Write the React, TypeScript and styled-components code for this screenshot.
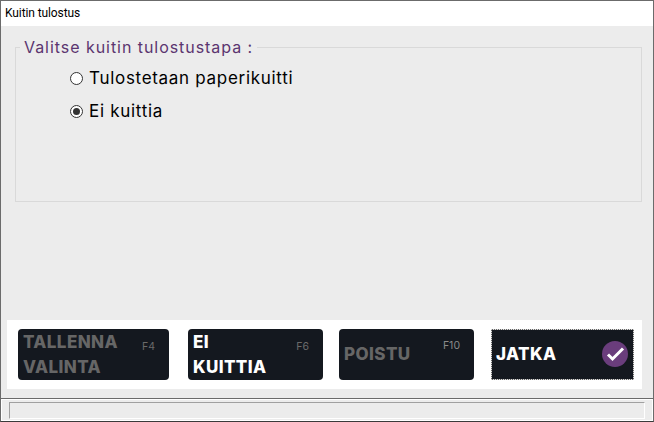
import React from 'react';
import styled, { createGlobalStyle } from 'styled-components';

const GlobalStyle = createGlobalStyle`
  html, body {
    margin: 0;
    padding: 0;
    background: #ececec;
  }
`;

const Window = styled.div`
  width: 654px;
  height: 422px;
  box-sizing: border-box;
  display: flex;
  flex-direction: column;
  background: #ececec;
  border-top: 1px solid #6b6b6b;
  border-left: 1px solid #6b6b6b;
  border-right: 1px solid #6b6b6b;
  border-bottom: 1px solid #3a3a3a;
  overflow: hidden;
`;

const TitleBar = styled.div`
  height: 25px;
  background: #fff;
  padding-left: 4px;
  font: 12px/25px Roboto, 'Liberation Sans', sans-serif;
  letter-spacing: -0.1px;
  color: #000;
`;

const Content = styled.div`
  flex: 1;
  display: flex;
  flex-direction: column;
  padding: 10px 11px 0 14px;
`;

const Group = styled.fieldset`
  margin: 0;
  padding: 0;
  height: 166px;
  box-sizing: border-box;
  border: 1px solid #d9d9d9;
`;

const Legend = styled.legend`
  margin-left: 4px;
  padding: 0 4px;
  font: 16px/22px Inter, 'Noto Sans', sans-serif;
  color: #5b3570;
  letter-spacing: 0.95px;
`;

const Options = styled.div`
  padding: 7px 0 0 54px;
  display: flex;
  flex-direction: column;
  gap: 7px;
`;

const Option = styled.label`
  display: flex;
  align-items: center;
  gap: 6px;
  height: 26px;
  font: 17px/26px Inter, 'Noto Sans', sans-serif;
  letter-spacing: 0.7px;
  color: #000;
`;

const Radio = styled.span<{ $checked?: boolean }>`
  width: 13px;
  height: 13px;
  box-sizing: border-box;
  border-radius: 50%;
  border: 1px solid #333;
  background: #fff;
  display: flex;
  align-items: center;
  justify-content: center;
  &::after {
    content: '';
    display: ${(p) => (p.$checked ? 'block' : 'none')};
    width: 7px;
    height: 7px;
    border-radius: 50%;
    background: #333;
  }
`;

const ActionBar = styled.div`
  margin-top: 118px;
  margin-left: -8px;
  width: 635px;
  height: 69px;
  background: #fff;
  display: flex;
  align-items: center;
  padding-left: 11px;
  box-sizing: border-box;
`;

const ActionButton = styled.button<{ $width: number; $gap: number; $focused?: boolean; $disabled?: boolean }>`
  position: relative;
  width: ${(p) => p.$width}px;
  margin-right: ${(p) => p.$gap}px;
  height: 51px;
  box-sizing: border-box;
  background: #14181f;
  border: none;
  border-radius: ${(p) => (p.$focused ? '0' : '4px')};
  outline: ${(p) => (p.$focused ? '1px dotted #ddd' : 'none')};
  outline-offset: -1px;
  box-shadow: ${(p) => (p.$focused ? 'inset 0 0 0 1px #666' : 'none')};
  padding: 0 0 0 5px;
  display: flex;
  align-items: center;
  text-align: left;
  font: 800 17px/25px Inter, 'Noto Sans', sans-serif;
  letter-spacing: 0.4px;
  color: ${(p) => (p.$disabled ? '#666' : '#fff')};
`;

const KeyHint = styled.span<{ $raised?: boolean }>`
  position: absolute;
  right: 14px;
  top: ${(p) => (p.$raised ? '11px' : '12px')};
  font: 400 10.5px/12px Inter, 'Noto Sans', sans-serif;
  letter-spacing: 0;
  color: ${(p) => (p.$raised ? '#8a8a8a' : '#6a6a6a')};
`;

const CheckBadge = styled.svg`
  position: absolute;
  right: 6px;
  top: 12px;
  width: 26px;
  height: 26px;
`;

const StatusArea = styled.div`
  margin-top: 9px;
  flex: 1;
  border-top: 1px solid #6b6b6b;
  box-shadow: inset 0 1px 0 #fff, inset 1px 0 0 #fff, inset -1px 0 0 #fff, inset 0 -1px 0 #fff;
  padding: 3px 8px 2px 8px;
  display: flex;
`;

const StatusField = styled.div`
  flex: 1;
  border-top: 1px solid #a0a0a0;
  border-left: 1px solid #a0a0a0;
  border-right: 1px solid #fff;
  border-bottom: 1px solid #fff;
  background: #ececec;
`;

export default function App() {
  return (
    <>
      <GlobalStyle />
      <Window>
        <TitleBar>Kuitin tulostus</TitleBar>
        <Content>
          <Group>
            <Legend>Valitse kuitin tulostustapa :</Legend>
            <Options>
              <Option>
                <Radio />
                Tulostetaan paperikuitti
              </Option>
              <Option>
                <Radio $checked />
                Ei kuittia
              </Option>
            </Options>
          </Group>
          <ActionBar>
            <ActionButton $width={151} $gap={19} $disabled>
              TALLENNA
              <br />
              VALINTA
              <KeyHint>F4</KeyHint>
            </ActionButton>
            <ActionButton $width={135} $gap={16}>
              EI
              <br />
              KUITTIA
              <KeyHint>F6</KeyHint>
            </ActionButton>
            <ActionButton $width={135} $gap={17} $disabled>
              POISTU
              <KeyHint $raised>F10</KeyHint>
            </ActionButton>
            <ActionButton $width={143} $gap={0} $focused>
              JATKA
              <CheckBadge viewBox="0 0 26 26">
                <circle cx="13" cy="13" r="13" fill="#6a3d7c" />
                <path d="M6 13.5l4.5 4.5L21 7.5" fill="none" stroke="#fff" strokeWidth="3" />
              </CheckBadge>
            </ActionButton>
          </ActionBar>
        </Content>
        <StatusArea>
          <StatusField />
        </StatusArea>
      </Window>
    </>
  );
}
